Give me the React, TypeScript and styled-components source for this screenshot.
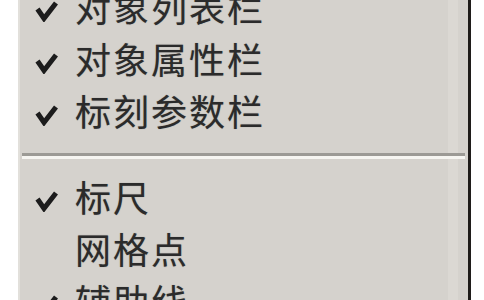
import React from 'react';
import styled, { createGlobalStyle } from 'styled-components';

const GlobalStyle = createGlobalStyle`
  html, body {
    margin: 0;
    padding: 0;
    background: #ffffff;
    overflow: hidden;
  }
`;

const Page = styled.div`
  width: 484px;
  height: 300px;
  overflow: hidden;
  padding-left: 18px;
  box-sizing: border-box;
`;

const Menu = styled.div`
  width: 453px;
  margin-top: -19px;
  box-sizing: border-box;
  background: linear-gradient(
    to right,
    #d5d2cd 0 428px,
    #dbd8d3 428px 438px,
    #d5d2cd 438px
  );
  border-left: 2px solid #e2e0db;
  border-right: 3px solid #1f1c1a;
  font-family: "Noto Sans CJK SC", "Noto Sans", sans-serif;
`;

const Item = styled.div`
  display: flex;
  align-items: center;
  height: 52px;
  padding-left: 15px;
  color: #2b2b2b;
  font-size: 36px;
  letter-spacing: 2px;
  line-height: 1;
  text-shadow: 0 0 1px rgba(40, 40, 40, 0.4);
`;

const CheckCell = styled.span`
  display: flex;
  width: 40px;
  height: 100%;
  align-items: center;
  padding-top: 8px;
  box-sizing: border-box;
`;

const Label = styled.span`
  white-space: nowrap;
  margin-top: -3px;
`;

const Separator = styled.div`
  padding: 16px 3px 12px 2px;
`;

const SeparatorLine = styled.div`
  height: 3px;
  background: #9c9a95;
  border-bottom: 3px solid #f6f5f1;
`;

function Check() {
  return (
    <svg width="24" height="22" viewBox="0 0 24 22">
      <polyline
        points="2.5,9 9,18.5 21,3"
        fill="none"
        stroke="#1c1c1c"
        strokeWidth="5"
        strokeLinejoin="miter"
      />
    </svg>
  );
}

type Entry = { label: string; checked: boolean };

const groupA: Entry[] = [
  { label: '对象列表栏', checked: true },
  { label: '对象属性栏', checked: true },
  { label: '标刻参数栏', checked: true },
];

const groupB: Entry[] = [
  { label: '标尺', checked: true },
  { label: '网格点', checked: false },
  { label: '辅助线', checked: true },
];

function MenuItem({ entry }: { entry: Entry }) {
  return (
    <Item>
      <CheckCell>{entry.checked && <Check />}</CheckCell>
      <Label>{entry.label}</Label>
    </Item>
  );
}

export default function App() {
  return (
    <Page>
      <GlobalStyle />
      <Menu>
        {groupA.map((e) => (
          <MenuItem key={e.label} entry={e} />
        ))}
        <Separator>
          <SeparatorLine />
        </Separator>
        {groupB.map((e) => (
          <MenuItem key={e.label} entry={e} />
        ))}
      </Menu>
    </Page>
  );
}
